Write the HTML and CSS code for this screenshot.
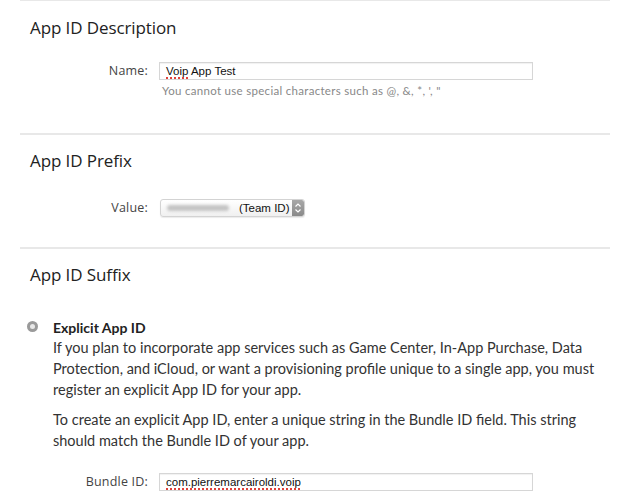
FILE: index.html
```html
<!DOCTYPE html>
<html>
<head>
<meta charset="utf-8">
<link rel="stylesheet" href="styles.css">
</head>
<body>
<div class="page">
  <section class="section sec-desc">
    <h2 class="heading">App ID Description</h2>
    <div class="field-row">
      <label class="field-label">Name:</label>
      <div class="field-body">
        <div class="text-input"><span class="misspelled">Voip</span> App Test</div>
        <div class="hint">You cannot use special characters such as @, &amp;, *, ', "</div>
      </div>
    </div>
  </section>

  <section class="section sec-prefix">
    <h2 class="heading">App ID Prefix</h2>
    <div class="field-row">
      <label class="field-label">Value:</label>
      <div class="field-body">
        <div class="select">
          <span class="blurred"></span>
          <span class="select-text">(Team ID)</span>
          <span class="stepper">
            <svg width="8" height="12" viewBox="0 0 8 12"><path d="M1.5 4.5 L4 2 L6.5 4.5 M1.5 7.5 L4 10 L6.5 7.5" fill="none" stroke="#fff" stroke-width="1.2"/></svg>
          </span>
        </div>
      </div>
    </div>
  </section>

  <section class="section sec-suffix">
    <h2 class="heading">App ID Suffix</h2>
    <div class="option">
      <span class="radio"><span class="radio-dot"></span></span>
      <div class="option-body">
        <div class="option-title">Explicit App ID</div>
        <p class="para">If you plan to incorporate app services such as Game Center, In-App Purchase, Data Protection, and iCloud, or want a provisioning profile unique to a single app, you must register an explicit App ID for your app.</p>
        <p class="para">To create an explicit App ID, enter a unique string in the Bundle ID field. This string should match the Bundle ID of your app.</p>
      </div>
    </div>
    <div class="field-row bundle-row">
      <label class="field-label">Bundle ID:</label>
      <div class="field-body">
        <div class="text-input"><span class="misspelled">com.pierremarcairoldi.voip</span></div>
      </div>
    </div>
  </section>
</div>
</body>
</html>
```

FILE: styles.css
```css
html, body {
  margin: 0;
  padding: 0;
  background: #ffffff;
}

.page {
  width: 590px;
  margin-left: 20px;
  font-family: Lato, "Open Sans", sans-serif;
  color: #333;
}

.section {
  border-top: 2px solid #e8e8e8;
  margin-top: -1px;
}

.heading {
  margin: 0;
  padding-left: 10px;
  font-family: "Open Sans", Lato, sans-serif;
  font-weight: 400;
  font-size: 17px;
  color: #222;
  letter-spacing: -0.1px;
  line-height: 22px;
}

.sec-desc { height: 133px; }
.sec-desc .heading { padding-top: 16px; }
.sec-desc .field-row { margin-top: 23px; }

.sec-prefix { height: 113px; }
.sec-prefix .heading { padding-top: 15px; }
.sec-prefix .field-row { margin-top: 27px; }

.sec-suffix .heading { padding-top: 15px; }

.field-row {
  display: flex;
  align-items: flex-start;
}

.field-label {
  width: 128px;
  text-align: right;
  padding-right: 11px;
  line-height: 18px;
  color: #444;
  font-family: "Open Sans", sans-serif;
  font-size: 12.5px;
  letter-spacing: 0.2px;
}

.text-input {
  width: 366px;
  height: 16px;
  border: 1px solid #d6d6d6;
  box-shadow: inset 0 1px 1px rgba(0,0,0,0.06);
  padding: 0 0 0 6px;
  font-family: "Liberation Sans", Arial, sans-serif;
  font-size: 11.5px;
  line-height: 17px;
  color: #111;
}

.misspelled {
  text-decoration: underline dotted #e0413a;
  text-decoration-thickness: 1.5px;
  text-underline-offset: 2px;
}

.hint {
  margin-top: 3px;
  padding-left: 3px;
  font-family: Lato, sans-serif;
  font-size: 11.5px;
  line-height: 16px;
  color: #888;
  letter-spacing: 0.3px;
}

.select {
  margin-left: 1px;
  width: 145px;
  height: 18px;
  box-sizing: border-box;
  border: 1px solid #d3d3d3;
  border-radius: 3px;
  background: linear-gradient(#ffffff, #f0f0f0);
  box-shadow: 0 1px 1px rgba(0,0,0,0.08);
  display: flex;
  align-items: center;
  font-family: "Liberation Sans", Arial, sans-serif;
  font-size: 11.5px;
  color: #111;
  overflow: hidden;
}

.blurred {
  display: block;
  width: 62px;
  height: 6px;
  margin-left: 6px;
  background: #c4c4c4;
  border-radius: 3px;
  filter: blur(1.8px);
}

.select-text {
  margin-left: 10px;
}

.stepper {
  margin-left: auto;
  width: 12px;
  height: 16px;
  background: linear-gradient(#a8a8a8, #8a8a8a);
  border-radius: 0 2px 2px 0;
  display: flex;
  align-items: center;
  justify-content: center;
}

.option {
  display: flex;
  margin-top: 34px;
}

.radio {
  width: 11px;
  height: 11px;
  border-radius: 50%;
  background: #9a9a9a;
  margin-left: 7px;
  margin-top: 1px;
  display: flex;
  align-items: center;
  justify-content: center;
  flex-shrink: 0;
}

.radio-dot {
  width: 5px;
  height: 5px;
  border-radius: 50%;
  background: #e8e8e8;
}

.option-body {
  margin-left: 15px;
  width: 560px;
}

.option-title {
  font-weight: 700;
  font-size: 14px;
  line-height: 16px;
  color: #222;
}

.para {
  margin: 1px 0 0 0;
  font-size: 14.5px;
  line-height: 21px;
  color: #333;
}

.para + .para {
  margin-top: 9px;
}

.bundle-row {
  margin-top: 22px;
}
```
